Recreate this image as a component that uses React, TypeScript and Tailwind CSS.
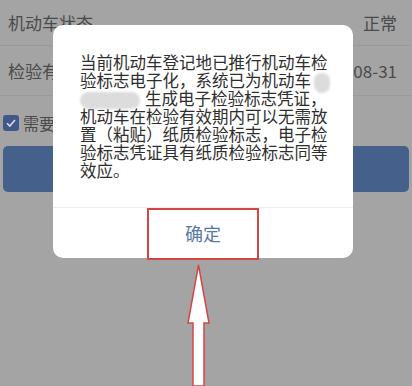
import React from "react";

const lines: React.ReactNode[] = [
  "当前机动车登记地已推行机动车检",
  <>
    验标志电子化，系统已为机动车
    <span className="inline-block align-middle ml-[3px] w-[16px] h-[20px] rounded-full bg-[#dcdcdc] blur-[1px]" />
  </>,
  <>
    <span className="inline-block align-middle mr-[5px] w-[60px] h-[17px] rounded-full bg-[#dcdcdc] blur-[1px]" />
    生成电子检验标志凭证，
  </>,
  "机动车在检验有效期内可以无需放",
  "置（粘贴）纸质检验标志，电子检",
  "验标志凭证具有纸质检验标志同等",
  "效应。",
];

export default function App() {
  return (
    <div
      className="relative w-[412px] h-[386px] overflow-hidden bg-[#a4a4a4]"
      style={{ fontFamily: '"Noto Sans CJK SC", "Noto Sans", sans-serif' }}
    >
      {/* page behind the dialog */}
      <div className="flex flex-col text-[17px] text-[#4a4a4a]">
        <div className="flex items-center justify-between h-[46px] pl-[8px] pr-[15px] border-b border-[#9a9a9a]">
          <span>机动车状态</span>
          <span>正常</span>
        </div>
        <div className="flex items-center justify-between h-[50px] pl-[8px] pr-[15px] border-b border-[#9a9a9a]">
          <span>检验有效期至</span>
          <span>2021-08-31</span>
        </div>
        <div className="flex items-center gap-[4px] h-[50px] pl-[3px] pt-[4px]">
          <span className="flex items-center justify-center w-[16px] h-[16px] rounded-[3px] bg-[#41598a]">
            <svg width="12" height="12" viewBox="0 0 12 12">
              <path d="M2 6.2 L4.8 9 L10 3" fill="none" stroke="#d8dde8" strokeWidth="1.6" />
            </svg>
          </span>
          <span className="text-[16px]">需要邮寄检验标志</span>
        </div>
        <div className="mx-[3px] h-[46px] rounded-[5px] bg-[#45608b]" />
      </div>

      {/* dialog */}
      <div className="absolute left-[53px] top-[25px] w-[300px] rounded-[10px] bg-white flex flex-col">
        <div className="px-[27px] pt-[28px] pb-[28px] text-[16.5px] leading-[18px] text-[#2e2e2e]">
          {lines.map((l, i) => (
            <div key={i} className="whitespace-nowrap h-[18px]">
              {l}
            </div>
          ))}
        </div>
        <div className="border-t border-[#ececec] h-[51px] flex items-center justify-center">
          <div className="w-[112px] h-[52px] -mb-[1px] border-2 border-[#d64545] flex items-center justify-center text-[18px] text-[#5a78a4]">
            确定
          </div>
        </div>
      </div>

      {/* arrow */}
      <svg className="absolute left-0 top-0" width="412" height="386" viewBox="0 0 412 386">
        <polygon
          points="198.5,265 209,323 204,323 204,386 193,386 193,323 188,323"
          fill="#fff"
          stroke="#d64545"
          strokeWidth="1.5"
          strokeLinejoin="miter"
        />
      </svg>
    </div>
  );
}
